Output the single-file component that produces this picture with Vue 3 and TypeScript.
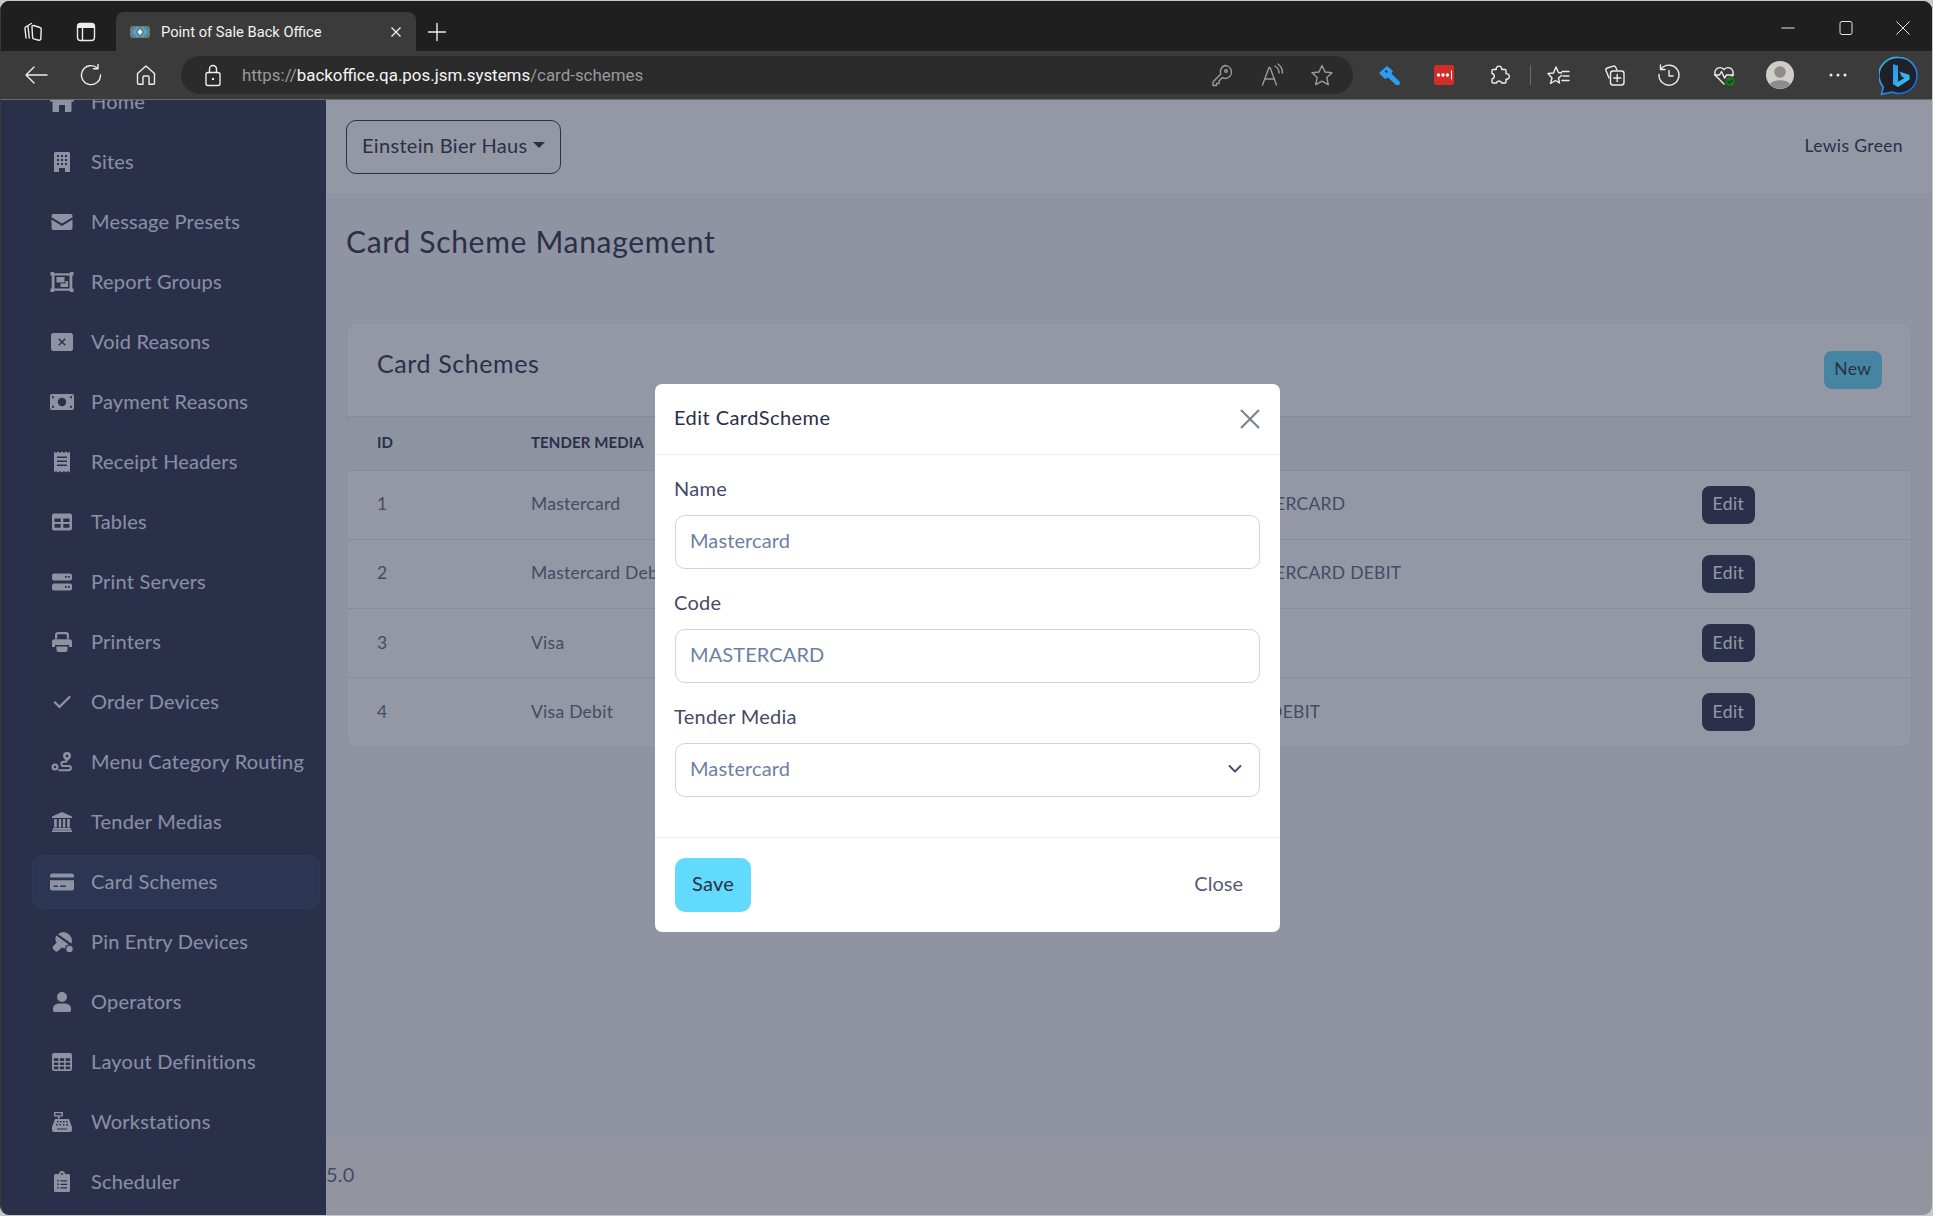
<script setup lang="ts">
interface NavItem {
  label: string
  d: string
  line?: string
}

interface Row {
  id: number
  media: string
  name: string
  code: string
}

const nav: NavItem[] = [
  { label: 'Home', d: 'M12 0 24 10v1.5h-2.5V21a1 1 0 0 1-1 1H15v-7H9v7H3.5a1 1 0 0 1-1-1v-9.5H0V10z' },
  { label: 'Sites', d: 'M5.5 2h13A1.5 1.5 0 0 1 20 3.5V22h-5v-4h-6v4H4V3.5A1.5 1.5 0 0 1 5.5 2z M7 5h2v2H7z M11 5h2v2h-2z M15 5h2v2h-2z M7 9h2v2H7z M11 9h2v2h-2z M15 9h2v2h-2z M7 13h2v2H7z M15 13h2v2h-2z M11 13h2v2h-2z' },
  { label: 'Message Presets', d: 'M3.5 4h17a2 2 0 0 1 2 2v1.2L12 13.5 1.5 7.2V6a2 2 0 0 1 2-2z M1.5 9.5 12 16l10.5-6.5V18a2 2 0 0 1-2 2h-17a2 2 0 0 1-2-2z' },
  { label: 'Report Groups', d: 'M.5 2h3.5v1.2h16V2h3.5v3.5h-1.2v13h1.2V22H20v-1.2H4V22H.5v-3.5h1.2v-13H.5z M4.5 5.5v13h15v-13z M6.5 7h8v5.5h-8z M15.5 11H18v6h-7.5v-3.5h5z' },
  { label: 'Void Reasons', d: 'M3.5 3h17A2.5 2.5 0 0 1 23 5.5v13a2.5 2.5 0 0 1-2.5 2.5h-17A2.5 2.5 0 0 1 1 18.5v-13A2.5 2.5 0 0 1 3.5 3z M9.2 8.2 12 11l2.8-2.8 1 1L13 12l2.8 2.8-1 1L12 13l-2.8 2.8-1-1L11 12 8.2 9.2z' },
  { label: 'Payment Reasons', d: 'M2 4h20a2 2 0 0 1 2 2v12a2 2 0 0 1-2 2H2a2 2 0 0 1-2-2V6a2 2 0 0 1 2-2z M12 7.8a4.2 4.2 0 1 0 0 8.4 4.2 4.2 0 0 0 0-8.4z M2 6.2h2.4A2.4 2.4 0 0 1 2 8.6z M19.6 6.2H22v2.4a2.4 2.4 0 0 1-2.4-2.4z M2 15.4a2.4 2.4 0 0 1 2.4 2.4H2z M22 15.4v2.4h-2.4a2.4 2.4 0 0 1 2.4-2.4z' },
  { label: 'Receipt Headers', d: 'M4 1.5l2 1.4 2-1.4 2 1.4 2-1.4 2 1.4 2-1.4 2 1.4 2-1.4v21l-2-1.4-2 1.4-2-1.4-2 1.4-2-1.4-2 1.4-2-1.4-2 1.4z M7 6.5h10v1.6H7z M7 10.5h10v1.6H7z M7 14.5h10v1.6H7z' },
  { label: 'Tables', d: 'M4 3.5h16a2 2 0 0 1 2 2v13a2 2 0 0 1-2 2H4a2 2 0 0 1-2-2v-13a2 2 0 0 1 2-2z M4.5 8.5h6.2v3.4H4.5z M13.3 8.5h6.2v3.4h-6.2z M4.5 14h6.2v3.8H4.5z M13.3 14h6.2v3.8h-6.2z' },
  { label: 'Print Servers', d: 'M4 3.5h16a2 2 0 0 1 2 2v3a2 2 0 0 1-2 2H4a2 2 0 0 1-2-2v-3a2 2 0 0 1 2-2z M4 13.5h16a2 2 0 0 1 2 2v3a2 2 0 0 1-2 2H4a2 2 0 0 1-2-2v-3a2 2 0 0 1 2-2z M15 6h1.8v1.8H15z M18 6h1.8v1.8H18z M15 16h1.8v1.8H15z M18 16h1.8v1.8H18z' },
  { label: 'Printers', d: 'M5 8.8V5a3 3 0 0 1 3-3h8a3 3 0 0 1 3 3v3.8h-2.2V5.5a1.3 1.3 0 0 0-1.3-1.3h-7a1.3 1.3 0 0 0-1.3 1.3v3.3z M4.5 9.2h15a2.5 2.5 0 0 1 2.5 2.5V17h-3v-2H5v2H2v-5.3a2.5 2.5 0 0 1 2.5-2.5z M6.5 16.5h11V20a2 2 0 0 1-2 2h-7a2 2 0 0 1-2-2z' },
  { label: 'Order Devices', d: 'M3.5 12.5 5 11l4.5 4.3 10-9.8L21 7 9.5 18.5z' },
  {
    label: 'Menu Category Routing',
    d: 'M5 13.5a3.5 3.5 0 1 0 0 7 3.5 3.5 0 0 0 0-7z M5 15.7a1.3 1.3 0 1 1 0 2.6 1.3 1.3 0 0 1 0-2.6z M17 2a4 4 0 0 1 4 4c0 2-2.5 4-4 5.5-1.5-1.5-4-3.5-4-5.5a4 4 0 0 1 4-4z M17 4.6a1.4 1.4 0 1 0 0 2.8 1.4 1.4 0 0 0 0-2.8z',
    line: 'M17 11.8h-3.5a2.1 2.1 0 0 0 0 4.2h5.3a2.1 2.1 0 0 1 0 4.2H8.5',
  },
  { label: 'Tender Medias', d: 'M12 2 22 6.5V8H2V6.5z M4.2 9h2.6v8.4H4.2z M8.8 9h2.4v8.4H8.8z M12.9 9h2.4v8.4h-2.4z M17.2 9h2.6v8.4h-2.6z M3 18h18v1.8H3z M2 20.2h20V22H2z' },
  { label: 'Card Schemes', d: 'M2.5 3.5h19A2.5 2.5 0 0 1 24 6v1.5H0V6a2.5 2.5 0 0 1 2.5-2.5z M0 10.2h24V18a2.5 2.5 0 0 1-2.5 2.5h-19A2.5 2.5 0 0 1 0 18z M3.5 15.5H8v1.4H3.5z M10 15.5h6v1.4h-6z' },
  { label: 'Pin Entry Devices', d: 'M13 2a9 9 0 0 1 9 9c0 1-.2 1.8-.5 2.6L8 4.2A9 9 0 0 1 13 2z M6.3 5.5 18.8 14.6a4.6 4.6 0 0 0-3.9 4.2L12 17.5l-4 3.5a2.2 2.2 0 0 1-3-.1l-1.8-1.8a2.2 2.2 0 0 1 0-3l3.5-3.5C5 11 5 8 6.3 5.5z M19.5 15.8a3.2 3.2 0 1 1 0 6.4 3.2 3.2 0 0 1 0-6.4z' },
  { label: 'Operators', d: 'M12 2a5 5 0 1 1 0 10 5 5 0 0 1 0-10z M8.5 13.5h7a5.5 5.5 0 0 1 5.5 5.5v1.2a1.8 1.8 0 0 1-1.8 1.8H4.8A1.8 1.8 0 0 1 3 20.2V19a5.5 5.5 0 0 1 5.5-5.5z' },
  { label: 'Layout Definitions', d: 'M4 3h16a2 2 0 0 1 2 2v14a2 2 0 0 1-2 2H4a2 2 0 0 1-2-2V5a2 2 0 0 1 2-2z M3.8 8.2h4.6V11H3.8z M9.9 8.2h4.2V11H9.9z M15.6 8.2h4.6V11h-4.6z M3.8 12.4h4.6V15H3.8z M9.9 12.4h4.2V15H9.9z M15.6 12.4h4.6V15h-4.6z M3.8 16.4h4.6v2.8H3.8z M9.9 16.4h4.2v2.8H9.9z M15.6 16.4h4.6v2.8h-4.6z' },
  { label: 'Workstations', d: 'M4 2h9v4.5H9.8v2h-2v-2H4z M5.5 3.2v2h6v-2z M5 9h14l3 8.2V20a2 2 0 0 1-2 2H4a2 2 0 0 1-2-2v-2.8z M7 11h1.6v1.4H7z M10 11h1.6v1.4H10z M13 11h1.6v1.4H13z M16 11h1.6v1.4H16z M6 14h1.6v1.4H6z M9.4 14H11v1.4H9.4z M12.8 14h1.6v1.4h-1.6z M16.4 14H18v1.4h-1.6z M7 18.4h10v1.2H7z' },
  { label: 'Scheduler', d: 'M9 4a3 3 0 0 1 6 0h3.5A1.5 1.5 0 0 1 20 5.5v15a1.5 1.5 0 0 1-1.5 1.5h-13A1.5 1.5 0 0 1 4 20.5v-15A1.5 1.5 0 0 1 5.5 4z M12 3a1 1 0 1 0 0 2 1 1 0 0 0 0-2z M7.2 10h1.6v1.6H7.2z M10.5 10.2H17v1.2h-6.5z M7.2 13.5h1.6v1.6H7.2z M10.5 13.7H17v1.2h-6.5z M7.2 17h1.6v1.6H7.2z M10.5 17.2H17v1.2h-6.5z' },
]

const rows: Row[] = [
  { id: 1, media: 'Mastercard', name: 'Mastercard', code: 'MASTERCARD' },
  { id: 2, media: 'Mastercard Debit', name: 'Mastercard Debit', code: 'MASTERCARD DEBIT' },
  { id: 3, media: 'Visa', name: 'Visa', code: 'VISA' },
  { id: 4, media: 'Visa Debit', name: 'Visa Debit', code: 'VISA DEBIT' },
]
</script>

<template>
  <div class="screen">
    <div class="window">
      <div class="tabstrip">
        <span class="slot">
          <svg class="ico" viewBox="0 0 24 24"><path d="M7 5.5 4.5 7A1.5 1.5 0 0 0 4 8.5l1 9.5M10.5 3.5 7.8 5A1.5 1.5 0 0 0 7 6.5l1.3 11.5" /><path d="M12.5 5.5 19 7.5a1.6 1.6 0 0 1 1.2 1.6l-.4 9.6a1.6 1.6 0 0 1-2 1.5l-5-1.3a1.6 1.6 0 0 1-1.2-1.5L11 7a1.2 1.2 0 0 1 1.5-1.5z" /></svg>
        </span>
        <span class="slot">
          <svg class="ico" viewBox="0 0 24 24"><rect x="3.5" y="3.5" width="17" height="17" rx="3" /><path d="M8.5 8v12.5" /><path class="solid" d="M6.5 3.5h11a3 3 0 0 1 3 3V8h-17V6.5a3 3 0 0 1 3-3z" /></svg>
        </span>
        <div class="tab">
          <svg class="favicon" viewBox="0 0 20 12">
            <rect width="20" height="12" rx="3" fill="#77797b" />
            <path d="M6.500 1 2 6l4.500 5h2.500L5.500 6 9 1z" fill="#29b6e6" />
            <path d="M13.500 1 18 6l-4.500 5H11l3.500-5L11 1z" fill="#29b6e6" />
            <path d="M10 3 7.500 6 10 9l2.500-3z" fill="#f4f7f8" />
          </svg>
          <span class="tab-title">Point of Sale Back Office</span>
          <svg class="tab-x" viewBox="0 0 12 12"><path d="M1.500 1.500l9 9M10.500 1.500l-9 9" /></svg>
        </div>
        <span class="slot plus">
          <svg class="ico" viewBox="0 0 24 24"><path d="M12 3.500v17M3.500 12h17" /></svg>
        </span>
        <div class="winctl">
          <span class="ctl"><svg viewBox="0 0 14 14"><path d="M0.500 7h13" /></svg></span>
          <span class="ctl"><svg viewBox="0 0 14 14"><rect x="1" y="0.500" width="12" height="13" rx="2" /></svg></span>
          <span class="ctl"><svg viewBox="0 0 14 14"><path d="M0.500 0.500l13 13M13.500 0.500l-13 13" /></svg></span>
        </div>
      </div>

      <div class="toolbar">
        <span class="slot wide">
          <svg class="ico" viewBox="0 0 24 24"><path d="M2 12h21M10 4l-8 8 8 8" /></svg>
        </span>
        <span class="slot wide">
          <svg class="ico" viewBox="0 0 24 24"><path d="M18.500 5.200A9.500 9.500 0 1 0 21.500 12" /><path d="M19 1.500v4.300h-4.500" /></svg>
        </span>
        <span class="slot wide">
          <svg class="ico" viewBox="0 0 24 24"><path d="M3.500 10.500 12 3l8.500 7.500V20a1.200 1.200 0 0 1-1.200 1.200h-4.300V14a1 1 0 0 0-1-1h-4a1 1 0 0 0-1 1v7.200H4.700A1.200 1.200 0 0 1 3.500 20z" /></svg>
        </span>
        <div class="omnibox">
          <svg class="ico lock" viewBox="0 0 24 24"><rect x="5" y="9.500" width="14" height="13" rx="2" /><path d="M8.500 9.500V6a3.500 3.500 0 0 1 7 0v3.500" /><circle class="solid" cx="12" cy="16" r="1.200" /></svg>
          <span class="url"><span class="dim">https://</span><span class="host">backoffice.qa.pos.jsm.systems</span><span class="dim">/card-schemes</span></span>
          <span class="slot mid dimicon">
            <svg class="ico" viewBox="0 0 24 24"><path d="M15 2.500a6.500 6.500 0 0 1 1.500 12.800c-1.500.3-3 0-4-.8L9 18v2.500H6.500V22.500H3V19l7.800-8c-.5-1-.6-2.500-.2-3.700A6.500 6.500 0 0 1 15 2.500z" /><circle cx="16" cy="8" r="1.300" /></svg>
          </span>
          <span class="slot mid dimicon">
            <svg class="ico" viewBox="0 0 24 24"><path d="M2.500 22 9 4.500h1L16.500 22M5 16h9.500" /><path d="M15 3a8 8 0 0 1 4 7M18 1a11 11 0 0 1 4.500 9" /></svg>
          </span>
          <span class="slot mid dimicon">
            <svg class="ico" viewBox="0 0 24 24"><path d="M12 2.500l3 6.500 7 .8-5.200 4.800 1.500 7L12 18.200 5.700 21.600l1.500-7L2 9.800 9 9z" /></svg>
          </span>
        </div>
        <div class="actions">
          <span class="slot wide">
            <svg class="ico" viewBox="0 0 24 24"><path class="bluekey" fill-rule="evenodd" d="M2 10 10 3l6 5-1.500 2.500L23 19l-.5 3h-3.500l-8-7.500-3 1.500z M9 7 7.500 8.500 9.500 10 11 8.500z" /></svg>
          </span>
          <span class="slot wide">
            <svg width="20" height="20" viewBox="0 0 20 20">
              <rect width="20" height="20" rx="2" fill="#d32d27" />
              <circle cx="4.500" cy="10" r="1.700" fill="#fff" />
              <circle cx="9" cy="10" r="1.700" fill="#fff" />
              <circle cx="13.500" cy="10" r="1.700" fill="#fff" />
              <rect x="17" y="5.500" width="1" height="9" fill="#fff" />
            </svg>
          </span>
          <span class="slot wide">
            <svg class="ico" viewBox="0 0 24 24"><path d="M5 7.500a1 1 0 0 1 1-1h3.200a2.800 2.800 0 1 1 5.500 0H18a1 1 0 0 1 1 1v3.200a2.800 2.800 0 1 1 0 5.500V19a1 1 0 0 1-1 1h-3.300a2.800 2.800 0 0 0-5.400 0H6a1 1 0 0 1-1-1v-3a2.800 2.800 0 0 0 0-5.500z" /></svg>
          </span>
          <span class="sep"></span>
          <span class="slot wide">
            <svg class="ico" viewBox="0 0 24 24"><path d="M14.500 12.500l-3 2.500 1 5L8.500 17.500 3.500 20.500l1.500-5.500L1 10.500l5.500-.5L9 4l2.500 5.500 3 .5M15 8.500h7M16 13h6M15 17.500h7" /></svg>
          </span>
          <span class="slot wide">
            <svg class="ico" viewBox="0 0 24 24"><path d="M7 15 4 7.500a2 2 0 0 1 1.300-2.500l6-1.800a2 2 0 0 1 2.400 1L15 7" /><rect x="8.500" y="8" width="13.500" height="14" rx="2.500" /><path d="M15.200 11.500v7M11.700 15h7" /></svg>
          </span>
          <span class="slot wide">
            <svg class="ico" viewBox="0 0 24 24"><path d="M4.500 5.500a10 10 0 1 1-2.500 6" /><path d="M3.500 2v4.500H8" /><path d="M12 7.500V13h4" /></svg>
          </span>
          <span class="slot wide">
            <svg class="ico" viewBox="0 0 24 24">
              <path d="M12 21 4 13A5 5 0 0 1 12 6.500 5 5 0 0 1 20 13M2.500 12h5l2-3.500 3 6.500 2-3h7" />
              <circle class="green" cx="18" cy="18.500" r="4.500" />
              <path class="greencheck" d="M16 18.500l1.500 1.500 2.500-2.500" />
            </svg>
          </span>
          <span class="slot wide avatar-slot">
            <svg width="28" height="28" viewBox="0 0 28 28">
              <circle cx="14" cy="14" r="14" fill="#cfcdc8" />
              <circle cx="14" cy="11" r="5.800" fill="#8f8d89" />
              <path d="M3.500 23a12 7.500 0 0 1 21 0 14 14 0 0 1-21 0z" fill="#8f8d89" />
            </svg>
          </span>
          <span class="slot wide dots">
            <svg class="ico" viewBox="0 0 24 24"><circle class="solid" cx="5" cy="12" r="1.500" /><circle class="solid" cx="12" cy="12" r="1.500" /><circle class="solid" cx="19" cy="12" r="1.500" /></svg>
          </span>
          <span class="slot wide bing">
            <svg width="40" height="40" viewBox="0 0 40 40">
              <defs>
                <linearGradient id="bingb" x1="0" y1="0" x2="1" y2="1">
                  <stop offset="0" stop-color="#2e8fe8" />
                  <stop offset="1" stop-color="#35c8f2" />
                </linearGradient>
                <linearGradient id="bingr" x1="0" y1="0" x2="1" y2="1">
                  <stop offset="0" stop-color="#31c3f0" />
                  <stop offset="1" stop-color="#1a5bd6" />
                </linearGradient>
              </defs>
              <path d="M20 1.500a18 18 0 1 1-7 34.600L2.500 38.200l1.800-7A18 18 0 0 1 20 1.500z" fill="#1e2127" stroke="url(#bingr)" stroke-width="1.600" />
              <path d="M14 8l5 1.800v16l6.500-3.700-3-1.500-2-5 10 3.500v4.500L19 31l-5-2.800z" fill="url(#bingb)" />
            </svg>
          </span>
        </div>
      </div>

      <div class="page">
        <aside class="sidebar">
          <nav class="nav">
            <a v-for="item in nav" :key="item.label" class="nav-item" :class="{ active: item.label === 'Card Schemes' }">
              <span class="nav-icon">
                <svg width="24" height="24" viewBox="0 0 24 24">
                  <path :d="item.d" fill-rule="evenodd" />
                  <path v-if="item.line" class="nav-line" :d="item.line" />
                </svg>
              </span>
              <span class="nav-label">{{ item.label }}</span>
            </a>
          </nav>
        </aside>

        <div class="main">
          <header class="topbar">
            <button class="site-btn">Einstein Bier Haus<span class="caret"></span></button>
            <span class="user">Lewis Green</span>
          </header>

          <section class="content">
            <h1 class="page-title">Card Scheme Management</h1>
            <div class="card">
              <div class="card-head">
                <h2>Card Schemes</h2>
                <button class="btn btn-new">New</button>
              </div>
              <table>
                <colgroup>
                  <col style="width: 154px" />
                  <col style="width: 347px" />
                  <col style="width: 348px" />
                  <col style="width: 476px" />
                  <col />
                </colgroup>
                <thead>
                  <tr>
                    <th>ID</th>
                    <th>Tender Media</th>
                    <th>Name</th>
                    <th>Code</th>
                    <th></th>
                  </tr>
                </thead>
                <tbody>
                  <tr v-for="row in rows" :key="row.id">
                    <td>{{ row.id }}</td>
                    <td>{{ row.media }}</td>
                    <td>{{ row.name }}</td>
                    <td>{{ row.code }}</td>
                    <td><button class="btn btn-edit">Edit</button></td>
                  </tr>
                </tbody>
              </table>
            </div>
          </section>

          <footer class="footer">5.0</footer>
        </div>

        <div class="backdrop"></div>

        <div class="modal-wrap">
          <div class="modal">
            <div class="modal-head">
              <span class="modal-title">Edit CardScheme</span>
              <svg class="modal-x" viewBox="0 0 20 20"><path d="M1 1l18 18M19 1 1 19" /></svg>
            </div>
            <div class="modal-body">
              <label class="field-label">Name</label>
              <input class="field" value="Mastercard" />
              <label class="field-label">Code</label>
              <input class="field" value="MASTERCARD" />
              <label class="field-label">Tender Media</label>
              <div class="select-wrap">
                <select class="field">
                  <option>Mastercard</option>
                </select>
                <svg class="chevron" viewBox="0 0 14 10"><path d="M1.500 2l5.500 5.500L12.500 2" /></svg>
              </div>
            </div>
            <div class="modal-foot">
              <button class="btn-save">Save</button>
              <button class="btn-close">Close</button>
            </div>
          </div>
        </div>
      </div>
    </div>
  </div>
</template>

<style scoped>
.screen {
  width: 1933px;
  height: 1216px;
  padding: 1px 1px 1px 0;
  box-sizing: border-box;
  background: #c9c9c9;
  overflow: hidden;
}

.window {
  position: relative;
  height: 100%;
  display: flex;
  flex-direction: column;
  border-left: 1px solid #3a3a3a;
  border-radius: 9px;
  overflow: hidden;
  background: #1f1f1f;
}

/* browser chrome */
.tabstrip {
  height: 50px;
  flex: none;
  display: flex;
  align-items: flex-end;
  padding-left: 5px;
  background: #1f1f1f;
}

.slot {
  width: 53px;
  height: 39px;
  flex: none;
  display: flex;
  align-items: center;
  justify-content: center;
}

.slot.wide {
  width: 55px;
}

.slot.mid {
  width: 50px;
}

.ico {
  width: 24px;
  height: 24px;
  fill: none;
  stroke: #ededed;
  stroke-width: 1.4;
  stroke-linejoin: round;
  stroke-linecap: round;
}

.ico .solid {
  fill: #ededed;
  stroke: none;
}

.dimicon .ico {
  stroke: #9b9b9b;
}

.tab {
  width: 300px;
  height: 39px;
  flex: none;
  margin-left: 4px;
  padding: 0 14px;
  box-sizing: border-box;
  display: flex;
  align-items: center;
  gap: 11px;
  background: #3b3b3b;
  border-radius: 8px 8px 0 0;
}

.favicon {
  width: 20px;
  height: 12px;
  flex: none;
  filter: blur(0.4px);
}

.tab-title {
  flex: 1;
  font: 14.700px Roboto, sans-serif;
  color: #f2f2f2;
  white-space: nowrap;
}

.tab-x {
  width: 12px;
  height: 12px;
  fill: none;
  stroke: #f0f0f0;
  stroke-width: 1.300;
}

.plus {
  margin-left: -6px;
}

.winctl {
  margin-left: auto;
  display: flex;
  align-self: stretch;
  align-items: center;
  padding-top: 2px;
  margin-top: 1px;
}

.ctl {
  width: 57.500px;
  display: flex;
  justify-content: center;
}

.ctl svg {
  width: 14px;
  height: 14px;
  fill: none;
  stroke: #e4e4e4;
  stroke-width: 1;
}

.toolbar {
  height: 49px;
  flex: none;
  display: flex;
  align-items: center;
  padding-left: 7px;
  box-sizing: border-box;
  background: #3b3b3b;
  border-bottom: 1px solid #6a6a6a;
}

.omnibox {
  width: 1172px;
  height: 38px;
  flex: none;
  margin-left: 8px;
  padding: 0 6px 0 20px;
  box-sizing: border-box;
  display: flex;
  align-items: center;
  background: #2b2b2b;
  border-radius: 19px;
}

.lock {
  flex: none;
  margin-right: 17px;
}

.url {
  flex: 1;
  font: 16.900px Roboto, sans-serif;
  white-space: nowrap;
}

.dim {
  color: #9a9a9a;
}

.host {
  color: #f5f5f5;
}

.actions {
  display: flex;
  align-items: center;
  margin-left: 8px;
}

.sep {
  width: 1px;
  height: 20px;
  margin: 0 0 0 4px;
  background: #6b6b6b;
}

.bluekey {
  fill: #2f9cf0;
  stroke: none;
}

.green {
  fill: #15791d;
  stroke: none;
}

.greencheck {
  stroke: #1f2b1f;
  stroke-width: 1.200;
}

.avatar-slot {
  margin-left: 1.500px;
}

.dots {
  margin-left: 3px;
}

.bing {
  margin-left: 6px;
  margin-top: 1px;
}

/* app */
.page {
  position: relative;
  flex: 1;
  min-height: 0;
  display: flex;
  font-family: Lato, 'Liberation Sans', sans-serif;
  font-size: 20px;
  letter-spacing: 0.270px;
  color: #2a2f4a;
  background: #f4f7fa;
  overflow: hidden;
}

.sidebar {
  width: 325px;
  flex: none;
  background: #2a2f4a;
  overflow: hidden;
}

.nav {
  display: flex;
  flex-direction: column;
  gap: 6px;
  margin-top: -25px;
  padding: 0 6px 0 31px;
  letter-spacing: 0.200px;
}

.nav-item {
  height: 54px;
  padding-left: 15px;
  box-sizing: border-box;
  display: flex;
  align-items: center;
  gap: 14px;
  color: #e8f0ff;
  border: 1px solid transparent;
  border-radius: 10px;
}

.nav-item.active {
  background: #2f3a58;
  border-color: #37426a;
}

.nav-label {
  margin-bottom: 3px;
}

.nav-icon {
  width: 30px;
  height: 24px;
  margin-left: -1px;
  flex: none;
  display: flex;
  justify-content: center;
  fill: #f4f5fc;
}

.nav-line {
  fill: none;
  stroke: #f4f5fc;
  stroke-width: 2;
}

.main {
  flex: 1;
  min-width: 0;
  display: flex;
  flex-direction: column;
}

.topbar {
  height: 94px;
  flex: none;
  padding: 0 20px;
  display: flex;
  align-items: center;
  justify-content: space-between;
  background: #fff;
}

.site-btn {
  height: 54px;
  padding: 0 15px 4px;
  display: flex;
  align-items: center;
  font: inherit;
  letter-spacing: 0.320px;
  color: #2a2f4a;
  background: transparent;
  border: 1px solid #2a2f4a;
  border-radius: 10px;
}

.caret {
  margin-left: 6px;
  margin-top: -1px;
  border-top: 6px solid #2a2f4a;
  border-left: 6px solid transparent;
  border-right: 6px solid transparent;
}

.user {
  font-size: 17.500px;
  letter-spacing: 0.370px;
  margin-top: -4px;
  margin-right: 9px;
}

.content {
  flex: 1;
  min-height: 0;
  padding: 0 20px;
}

.page-title {
  margin: 29px 0 62.500px;
  font-size: 30px;
  line-height: 36px;
  font-weight: 400;
  letter-spacing: 0.700px;
}

.card {
  background: #fff;
  border: 1px solid #eceff4;
  border-radius: 12px;
  overflow: hidden;
}

.card-head {
  height: 94px;
  padding: 0 29px 0 30px;
  display: flex;
  justify-content: space-between;
  box-sizing: border-box;
  border-bottom: 1px solid #e2e6ee;
}

.card-head h2 {
  margin: 25px 0 0;
  font-size: 25px;
  line-height: 30px;
  font-weight: 400;
  letter-spacing: 0.600px;
}

.btn {
  height: 38px;
  padding: 0 10.500px 2px;
  font: 17.500px Lato, 'Liberation Sans', sans-serif;
  letter-spacing: 0.450px;
  border: 0;
  border-radius: 8px;
}

.btn-new {
  margin-top: 28px;
  color: #2a2f4a;
  background: #61dafb;
}

.btn-edit {
  color: #fff;
  background: #2a2f4a;
  vertical-align: middle;
}

table {
  width: 100%;
  table-layout: fixed;
  border-collapse: collapse;
}

th {
  height: 51px;
  padding: 0 0 2px 30px;
  text-align: left;
  font-size: 15px;
  font-weight: 700;
  text-transform: uppercase;
  letter-spacing: 0.100px;
  background: #f3f6fa;
}

td {
  height: 66.250px;
  padding: 0 0 2px 30px;
  font-size: 17.500px;
  color: #5f6680;
  border-top: 1px solid #e6e9f0;
  white-space: nowrap;
}

td:last-child {
  padding-bottom: 0;
}

.footer {
  height: 76px;
  flex: none;
  padding: 20px 0 0;
  box-sizing: border-box;
  line-height: 30px;
  color: #5f6680;
  background: #fafbf7;
}

/* edit dialog */
.backdrop {
  position: absolute;
  inset: 0;
  background: rgba(42, 47, 74, 0.5);
}

.modal-wrap {
  position: absolute;
  inset: 0;
  padding: 284px 0 0 2px;
  display: flex;
  justify-content: center;
  align-items: flex-start;
}

.modal {
  width: 625px;
  background: #fff;
  border-radius: 7px;
}

.modal-head {
  height: 71px;
  padding: 0 20px;
  box-sizing: border-box;
  display: flex;
  align-items: center;
  justify-content: space-between;
  border-bottom: 1px solid #eceef2;
}

.modal-title {
  margin-left: -1px;
  margin-bottom: 5px;
  font-size: 20px;
  line-height: 30px;
  letter-spacing: 0.450px;
}

.modal-x {
  width: 20px;
  height: 20px;
  fill: none;
  stroke: #7f8390;
  stroke-width: 2.200;
}

.modal-body {
  padding: 20px 20px 0;
  height: 382px;
  box-sizing: border-box;
  display: flex;
  flex-direction: column;
}

.field-label {
  height: 30px;
  margin-left: -1px;
  line-height: 26px;
  margin-bottom: 10px;
  color: #454a67;
}

.field {
  display: block;
  width: 100%;
  height: 54px;
  flex: none;
  margin-bottom: 20px;
  padding: 0 14px 5px;
  box-sizing: border-box;
  font: 20px Lato, 'Liberation Sans', sans-serif;
  letter-spacing: 0.100px;
  color: #6d80a4;
  background: #fff;
  border: 1px solid #cdd3e2;
  border-radius: 10px;
  outline: none;
  appearance: none;
}

.select-wrap {
  position: relative;
}

.chevron {
  position: absolute;
  right: 18px;
  top: 21px;
  width: 14px;
  height: 10px;
  fill: none;
  stroke: #454a67;
  stroke-width: 1.800;
  stroke-linecap: round;
  stroke-linejoin: round;
}

.modal-foot {
  height: 95px;
  padding: 0 20px;
  box-sizing: border-box;
  display: flex;
  align-items: center;
  justify-content: space-between;
  border-top: 1px solid #eceef2;
}

.btn-save {
  width: 76px;
  height: 54px;
  padding-bottom: 5px;
  font: 20px Lato, 'Liberation Sans', sans-serif;
  letter-spacing: 0.300px;
  color: #2a2f4a;
  background: #61dafb;
  border: 0;
  border-radius: 10px;
}

.btn-close {
  padding: 0 17px 5px 16px;
  height: 54px;
  font: 20px Lato, 'Liberation Sans', sans-serif;
  color: #565c75;
  background: none;
  border: 0;
}
</style>

<style>
html,
body {
  margin: 0;
  background: #c9c9c9;
}
</style>
